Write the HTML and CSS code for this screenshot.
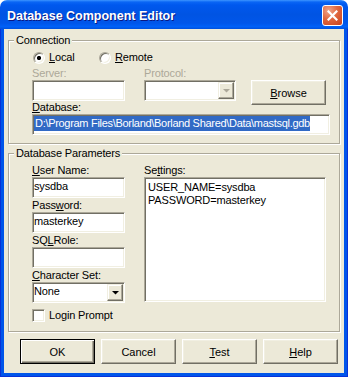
FILE: index.html
```html
<!DOCTYPE html>
<html lang="en">
<head>
  <meta charset="UTF-8" />
  <title>Database Component Editor</title>
  <link rel="stylesheet" href="styles.css">
</head>
<body>
  <div class="window">
    <div class="titlebar">
      <span class="title">Database Component Editor</span>
      <button class="close" title="Close">
        <svg width="11" height="11" viewBox="0 0 11 11"><path d="M1.5 1.5L9.5 9.5M9.5 1.5L1.5 9.5" stroke="#fff" stroke-width="2.2" stroke-linecap="square"/></svg>
      </button>
    </div>

    <div class="frame">
      <div class="client">

        <div class="group group-conn">
          <span class="group-title">Connection</span>
          <div class="conn-body">
            <div class="radios">
              <label class="radio"><span class="radio-dot checked"></span><span><u>L</u>ocal</span></label>
              <label class="radio"><span class="radio-dot"></span><span><u>R</u>emote</span></label>
            </div>
            <span class="lbl disabled server-lbl">Server:</span>
            <span class="lbl disabled proto-lbl">Protocol:</span>
            <span class="edit server-edit"></span>
            <span class="edit combo proto-edit">
              <span class="combo-text"></span>
              <span class="drop"><svg width="7" height="4" viewBox="0 0 7 4"><path d="M0 0h7L3.5 3.5z" fill="#aca899"/></svg></span>
            </span>
            <button class="btn browse"><u>B</u>rowse</button>
            <span class="lbl db-lbl"><u>D</u>atabase:</span>
            <span class="edit db-edit"><span class="sel">D:\Program Files\Borland\Borland Shared\Data\mastsql.gdb</span></span>
          </div>
        </div>

        <div class="group group-params">
          <span class="group-title">Database Parameters</span>
          <div class="params-body">
            <div class="col-left">
              <span class="lbl"><u>U</u>ser Name:</span>
              <span class="edit">sysdba</span>
              <span class="lbl">Pass<u>w</u>ord:</span>
              <span class="edit">masterkey</span>
              <span class="lbl">SQ<u>L</u>Role:</span>
              <span class="edit"></span>
              <span class="lbl"><u>C</u>haracter Set:</span>
              <span class="edit combo">
                <span class="combo-text">None</span>
                <span class="drop"><svg width="7" height="4" viewBox="0 0 7 4"><path d="M0 0h7L3.5 3.5z" fill="#000"/></svg></span>
              </span>
              <label class="check"><span class="check-box"></span><span>Lo<u>g</u>in Prompt</span></label>
            </div>
            <div class="col-right">
              <span class="lbl">Se<u>t</u>tings:</span>
              <div class="edit memo">USER_NAME=sysdba<br>PASSWORD=masterkey</div>
            </div>
          </div>
        </div>

        <div class="buttons">
          <button class="btn default">OK</button>
          <button class="btn">Cancel</button>
          <button class="btn"><u>T</u>est</button>
          <button class="btn"><u>H</u>elp</button>
        </div>

      </div>
    </div>
  </div>
</body>
</html>
```

FILE: styles.css
```css
* {
  box-sizing: border-box;
}
body {
  margin: 0;
  background: #fff;
  font-family: "Liberation Sans", Arial, sans-serif;
  font-size: 11px;
  letter-spacing: -0.15px;
  color: #000;
}
u {
  text-decoration: underline;
  text-underline-offset: 1px;
}

/* window chrome */
.window {
  width: 348px;
  height: 377px;
  overflow: hidden;
}
.titlebar {
  height: 29px;
  display: flex;
  align-items: flex-start;
  padding: 0 5px 0 7px;
  border-radius: 7px 7px 0 0;
  background: linear-gradient(#3d95ff 0, #0a66f5 2px, #0058ee 5px, #0054e3 50%, #0056ea 80%, #0061f8 92%, #0050dc 100%);
}
.title {
  flex: 1;
  margin-top: 9px;
  line-height: 15px;
  font-size: 12.5px;
  font-weight: bold;
  letter-spacing: 0;
  color: #fff;
  text-shadow: 1px 1px #0a1883;
}
.close {
  width: 21px;
  height: 21px;
  margin-top: 5px;
  padding: 0;
  display: flex;
  align-items: center;
  justify-content: center;
  border: 1px solid #fff;
  border-radius: 3px;
  background: radial-gradient(circle at 30% 25%, #f0a68c 0, #e0673f 45%, #c8401c 100%);
}
.frame {
  padding: 0 3px 3px;
  border: 1px solid #0831d9;
  border-top: 0;
  background: #0055ea;
}
.client {
  height: 344px;
  padding: 11px 4px 0;
  background: #ece9d8;
}

/* group boxes */
.group {
  border: 1px solid #aca899;
  box-shadow: inset 1px 1px #fff, 1px 1px #fff;
}
.group-title {
  display: block;
  width: fit-content;
  margin: -7px 0 0 5px;
  padding: 0 2px;
  line-height: 13px;
  background: #ece9d8;
}
.group-params {
  margin-top: 9px;
}
.conn-body {
  display: grid;
  grid-template-columns: 93px 92px 75px;
  grid-template-rows: 15px 14px 21px 13px 21px;
  column-gap: 19px;
  padding: 4px 0 8px 23px;
}
.radios {
  grid-column: 1 / 4;
  grid-row: 1;
}
.server-lbl {
  grid-column: 1;
  grid-row: 2;
}
.proto-lbl {
  grid-column: 2;
  grid-row: 2;
}
.server-edit {
  grid-column: 1;
  grid-row: 3;
}
.proto-edit {
  grid-column: 2;
  grid-row: 3;
}
.browse {
  grid-column: 3;
  grid-row: 3;
  align-self: start;
  margin-left: -4px;
}
.db-lbl {
  grid-column: 1 / 4;
  grid-row: 4;
}
.db-edit {
  grid-column: 1 / 4;
  grid-row: 5;
}
.params-body {
  display: flex;
  gap: 19px;
  padding: 3px 0 9px 23px;
}
.col-left {
  width: 93px;
  display: flex;
  flex-direction: column;
}
.col-right {
  width: 182px;
  display: flex;
  flex-direction: column;
}

/* controls */
.lbl {
  display: block;
  height: 14px;
  line-height: 14px;
  white-space: nowrap;
}
.db-lbl {
  height: 13px;
  line-height: 13px;
}
.lbl.disabled {
  color: #aca899;
}
.radios {
  display: flex;
  align-items: flex-start;
}
.radio,
.check {
  display: flex;
  align-items: center;
  gap: 4px;
  height: 13px;
  line-height: 13px;
}
.radio {
  width: 65px;
  margin-left: 1px;
}
.radio-dot {
  width: 12px;
  height: 12px;
  border-radius: 50%;
  border: 1px solid;
  border-color: #aca899 #fff #fff #aca899;
  box-shadow: inset 1px 1px #716f64, inset -1px -1px #f1efe2;
  background: #fff;
}
.radio-dot.checked {
  background: radial-gradient(circle, #000 0, #000 1.8px, #fff 2.4px);
}
.check {
  margin-top: 6px;
}
.check-box {
  width: 13px;
  height: 13px;
  border: 1px solid;
  border-color: #aca899 #fff #fff #aca899;
  box-shadow: inset 1px 1px #716f64, inset -1px -1px #f1efe2;
  background: #fff;
}
.edit {
  display: block;
  height: 21px;
  padding: 1px 1px 0;
  line-height: 15px;
  white-space: nowrap;
  overflow: hidden;
  background: #fff;
  border: 1px solid;
  border-color: #aca899 #fff #fff #aca899;
  box-shadow: inset 1px 1px #716f64, inset -1px -1px #f1efe2;
}
.edit.combo {
  display: flex;
  padding: 0;
}
.combo-text {
  flex: 1;
  padding: 1px 1px 0;
}
.drop {
  width: 16px;
  height: 17px;
  margin: 1px 1px 0 0;
  display: flex;
  align-items: center;
  justify-content: center;
  background: #ece9d8;
  border: 1px solid;
  border-color: #f1efe2 #716f64 #716f64 #f1efe2;
  box-shadow: inset -1px -1px #aca899, inset 1px 1px #fff;
}
.sel {
  display: inline-block;
  padding-left: 1px;
  letter-spacing: -0.3px;
  background: #316ac5;
  color: #fff;
}
.memo {
  height: 125px;
  padding: 3px 3px 0;
  line-height: 13px;
}

/* buttons */
.btn {
  width: 75px;
  height: 25px;
  padding: 0;
  font: inherit;
  color: #000;
  background: #ece9d8;
  border: 1px solid;
  border-color: #fff #716f64 #716f64 #fff;
  box-shadow: inset -1px -1px #aca899, inset 1px 1px #f1efe2;
}
.btn.default {
  border: 1px solid #000;
  box-shadow: inset 1px 1px #fff, inset -1px -1px #716f64, inset -2px -2px #aca899;
}
.buttons {
  display: flex;
  gap: 6px;
  margin-top: 7px;
  padding-left: 12px;
}
```
